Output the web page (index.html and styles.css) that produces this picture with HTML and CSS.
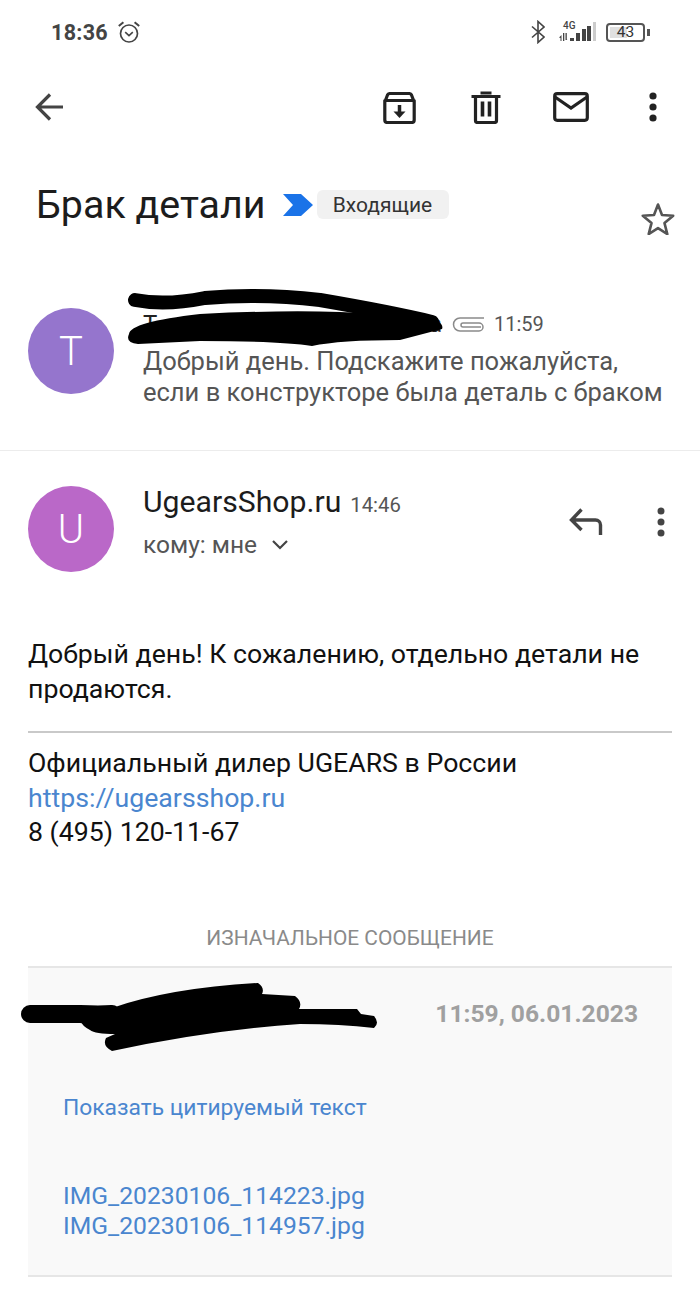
FILE: index.html
```html
<!DOCTYPE html>
<html lang="ru">
<head>
<meta charset="utf-8">
<title>Брак детали</title>
<link rel="stylesheet" href="styles.css">
</head>
<body>
<div class="page">
  <div class="status">
    <div class="status-left">
      <span class="clock">18:36</span>
      <svg class="alarm" width="24" height="24" viewBox="0 0 24 24" fill="none" stroke="#444" stroke-width="1.7"><circle cx="12" cy="13.5" r="8.5"/><path d="M8.2 12.2 12 15.6l3.8-3.4" stroke-width="1.6"/><path d="M1.8 6 6.4 2.2M22.2 6 17.6 2.2" stroke-width="2"/></svg>
    </div>
    <div class="status-right">
      <svg class="ico-bt" width="14" height="24" viewBox="0 0 14 24" fill="none" stroke="#444" stroke-width="1.6"><path d="M1 6.5 13 17 7 22.5V1.5L13 7 1 17.500"/></svg>
      <div class="signal">
        <span class="net">4G</span>
        <svg width="38" height="30" viewBox="0 0 38 30"><g fill="#444"><path d="M0 20.500l2.500-2.500v6H1.500v-3zM4 16h1.300v8H4zM6.500 16h1.300v6.500l.7.500H6.500z"/><rect x="11" y="21" width="4" height="3"/><rect x="17" y="16" width="4" height="8"/><rect x="23" y="12" width="4" height="12"/><rect x="28" y="9" width="4" height="15"/></g><rect x="34" y="5" width="3" height="19" fill="#ccc"/></svg>
      </div>
      <div class="battery-wrap">
        <div class="battery"><span class="battery-fill"></span><span class="battery-num">43</span></div>
        <span class="battery-cap"></span>
      </div>
    </div>
  </div>

  <div class="toolbar">
    <svg class="ico-back" width="30" height="30" viewBox="0 0 30 30" fill="none" stroke="#444" stroke-width="3.200"><path d="M29 15H4M16 2.500 3.500 15 16 27.500"/></svg>
    <div class="actions">
      <svg class="ico-archive" width="33" height="33" viewBox="0 0 33 33" fill="none" stroke="#222" stroke-width="3.200"><path d="M2 10.500 4.500 4a2.500 2.500 0 0 1 2-1.500h20a2.500 2.500 0 0 1 2 1.500L31 10.500M1.800 9.500h29.400V29a2.500 2.500 0 0 1-2.500 2.500H4.300A2.500 2.500 0 0 1 1.800 29z" stroke-linejoin="round"/><path d="M16.500 14v8" stroke-width="3.500"/><path d="M10.500 20.500h12L16.500 27z" fill="#222" stroke="none"/></svg>
      <svg class="ico-trash" width="30" height="33" viewBox="0 0 30 33" fill="none" stroke="#222" stroke-width="3.200"><path d="M.5 5.500h29M9.500 2h11"/><path d="M4.500 6v23.500a2 2 0 0 0 2 2h17a2 2 0 0 0 2-2V6"/><path d="M11.500 10.500v15M18.500 10.500v15" stroke-width="3.600"/></svg>
      <svg class="ico-mail" width="36" height="30" viewBox="0 0 36 30" fill="none" stroke="#222" stroke-width="3.200"><rect x="1.700" y="1.700" width="32.600" height="26.600" rx="2.500"/><path d="M2 5l16 11L34 5"/></svg>
      <svg class="ico-more" width="8" height="30" viewBox="0 0 8 30" fill="#222"><circle cx="4" cy="4" r="3.600"/><circle cx="4" cy="15" r="3.600"/><circle cx="4" cy="26" r="3.600"/></svg>
    </div>
  </div>

  <div class="subject">
    <h1 class="subject-title">Брак детали</h1>
    <svg class="marker" width="32" height="24" viewBox="0 0 32 24"><path d="M1 1h18l12 11-12 11H1l10-11z" fill="#1a73e8"/></svg>
    <span class="label">Входящие</span>
    <svg class="star" width="36" height="34" viewBox="0 0 36 34" fill="none" stroke="#555" stroke-width="2.600"><path d="M18 3.500l4 10.500 11.200.7-8.700 7.400 2.800 11-9.300-6-9.300 6 2.800-11-8.700-7.400 11.200-.7z" stroke-linejoin="round"/></svg>
  </div>

  <div class="thread collapsed">
    <div class="avatar avatar-t">T</div>
    <div class="thread-text">
      <div class="sender-row">
        <div class="sender-hidden"><span>Т</span><span>а</span></div>
        <svg class="clip" width="33" height="16" viewBox="0 0 33 16" fill="none" stroke="#8a8a8a" stroke-width="1.500"><path d="M32 2H8a6.500 6.500 0 0 0 0 13h19a4 4 0 0 0 0-8H11a2 2 0 0 0 0 4h18"/></svg>
        <span class="time-small">11:59</span>
      </div>
      <p class="snippet">Добрый день. Подскажите пожалуйста,<br>если в конструкторе была деталь с браком</p>
    </div>
  </div>

  <div class="thread open">
    <div class="avatar avatar-u">U</div>
    <div class="thread-text">
      <div class="from"><span class="from-name">UgearsShop.ru</span><span class="from-time">14:46</span></div>
      <div class="to">кому: мне
        <svg width="16" height="10" viewBox="0 0 16 10" fill="none" stroke="#444" stroke-width="2.200"><path d="M1 1l7 7 7-7"/></svg>
      </div>
    </div>
    <div class="open-actions">
      <svg width="34" height="28" viewBox="0 0 34 28" fill="none" stroke="#444" stroke-width="3.400"><path d="M31.500 27V17a5 5 0 0 0-5-5H4M12.500 1.500 2.500 12l10 10"/></svg>
      <svg width="8" height="30" viewBox="0 0 8 30" fill="#444"><circle cx="4" cy="4" r="3.500"/><circle cx="4" cy="15" r="3.500"/><circle cx="4" cy="26" r="3.500"/></svg>
    </div>
  </div>

  <div class="body">
    <p class="message">Добрый день! К сожалению, отдельно детали не продаются.</p>
    <hr class="sig-rule">
    <p class="signature">Официальный дилер UGEARS в России<br><a class="link" href="#">https://ugearsshop.ru</a><br>8 (495) 120-11-67</p>
    <div class="orig-title">ИЗНАЧАЛЬНОЕ СООБЩЕНИЕ</div>
    <div class="quote">
      <div class="quote-head"><span class="quote-from">Т</span><span class="quote-date">11:59, 06.01.2023</span></div>
      <a class="quote-toggle" href="#">Показать цитируемый текст</a>
      <div class="files">
        <a class="file" href="#">IMG_20230106_114223.jpg</a>
        <a class="file" href="#">IMG_20230106_114957.jpg</a>
      </div>
    </div>
  </div>

  <svg class="scribble" width="700" height="1289" viewBox="0 0 700 1289" fill="#000">
    <path d="M135 300Q165 306 205 298Q260 293 320 300Q390 312 432 322" fill="none" stroke="#000" stroke-width="14" stroke-linecap="round"/>
    <path d="M129 334Q130 322 200 314Q280 310 340 312L425 316Q445 322 442 329L400 340Q340 340 312 346Q280 341 200 341L138 344Q125 343 129 334z"/>
    <path d="M30 1014H80Q100 1015 112 1014" fill="none" stroke="#000" stroke-width="18" stroke-linecap="round"/>
    <path d="M80 1020L112 1008Q170 988 258 983Q265 988 262 994L295 996Q303 1002 299 1009L357 1009L361 1014L374 1016Q380 1023 374 1028Q340 1024 300 1024Q210 1030 112 1051Q102 1046 106 1038L115 1034Q95 1034 90 1030Q82 1026 80 1020z"/>
  </svg>
</div>
</body>
</html>
```
FILE: styles.css
```css
* { box-sizing: border-box; }
html, body { margin: 0; padding: 0; background: #fff; }
body { font-family: Roboto, "Noto Sans", sans-serif; color: #111; }
p, h1 { margin: 0; }
a { text-decoration: none; }

.page { position: relative; width: 700px; height: 1289px; overflow: hidden; }

.status { height: 64px; display: flex; justify-content: space-between; align-items: center; padding: 0 50px 0 51px; }
.status-left { display: flex; align-items: center; gap: 9px; }
.clock { font-size: 21.5px; font-weight: 700; color: #444; letter-spacing: .3px; }
.status-right { display: flex; align-items: center; }
.ico-bt { margin-right: 14px; }
.signal { position: relative; width: 38px; height: 30px; margin-right: 9px; }
.signal svg { display: block; }
.net { position: absolute; left: 4px; top: 4px; font-size: 10px; font-weight: 500; color: #444; line-height: 10px; }
.battery-wrap { display: flex; align-items: center; gap: 2px; }
.battery { position: relative; width: 39px; height: 19px; border: 2px solid #555; border-radius: 4px; display: flex; align-items: center; justify-content: center; }
.battery-fill { position: absolute; left: 2px; top: 2px; bottom: 2px; width: 17px; background: #e0e0e0; }
.battery-num { position: relative; font-size: 15.5px; color: #333; line-height: 15px; }
.battery-cap { width: 3px; height: 7px; background: #555; }

.toolbar { height: 86px; display: flex; justify-content: space-between; align-items: center; padding: 0 43px 0 34px; }
.actions { display: flex; align-items: center; }
.ico-archive { margin-right: 55px; }
.ico-trash { margin-right: 52px; }
.ico-mail { margin-right: 60px; }

.subject { position: relative; height: 108px; display: flex; align-items: flex-start; padding: 29px 0 0 36px; }
.subject-title { font-size: 39.4px; font-weight: 400; line-height: 52px; color: #1c1c1c; }
.marker { margin: 14px 0 0 17px; }
.label { margin: 11px 0 0 3px; height: 29px; width: 132px; padding-right: 2px; background: #f1f1f1; border-radius: 6px; font-size: 21px; line-height: 30px; text-align: center; color: #333; }
.star { position: absolute; left: 640px; top: 51px; }

.thread { display: flex; padding-left: 28px; }
.avatar { width: 86px; height: 86px; flex: none; border-radius: 50%; display: flex; align-items: center; justify-content: center; color: #fff; font-size: 40px; font-weight: 300; }
.avatar-t { background: #9575cd; }
.avatar-u { background: #ba68c8; }
.thread-text { margin-left: 29px; }

.collapsed { height: 193px; padding-top: 50px; border-bottom: 1px solid #ececec; }
.sender-row { display: flex; align-items: center; height: 36px; margin-top: -2px; }
.sender-hidden { width: 299px; display: flex; justify-content: space-between; font-size: 24px; color: #222; }
.clip { margin-left: 10px; }
.time-small { margin-left: 9px; font-size: 20px; color: #555; }
.snippet { margin-top: 4px; font-size: 25.5px; line-height: 31px; color: #555; white-space: nowrap; }

.open { position: relative; height: 146px; padding-top: 35px; }
.from { display: flex; align-items: baseline; gap: 9px; height: 38px; margin-top: -2px; }
.from-name { font-size: 30.2px; color: #1c1c1c; line-height: 36px; }
.from-time { font-size: 20.3px; color: #555; }
.to { display: flex; align-items: center; gap: 15px; margin-top: 6px; font-size: 24.5px; line-height: 34px; color: #555; }
.open-actions { position: absolute; right: 35px; top: 56px; width: 96px; display: flex; justify-content: space-between; align-items: center; }

.body { padding: 40px 28px 0; }
.message { font-size: 26.7px; line-height: 35px; color: #111; }
.sig-rule { margin: 24px 0 13px; height: 2px; border: 0; background: #c9c9c9; }
.signature { font-size: 26.7px; line-height: 34.5px; color: #111; }
.link { color: #4a86cf; }
.orig-title { margin-top: 75px; font-size: 20.9px; line-height: 26px; text-align: center; color: #8a8a8a; }
.quote { margin-top: 15px; height: 311px; padding: 0 34px 0 35px; background: #f9f9f9; border-top: 2px solid #e6e6e6; border-bottom: 2px solid #e6e6e6; }
.quote-head { display: flex; justify-content: space-between; align-items: center; height: 92px; }
.quote-from { color: #6aa84f; font-size: 24px; }
.quote-date { font-size: 24.6px; font-weight: 700; color: #a0a0a0; }
.quote-toggle { display: block; margin-top: 33px; font-size: 22.8px; line-height: 30px; color: #4a86cf; }
.files { margin-top: 58px; }
.file { display: block; font-size: 24.7px; line-height: 30px; color: #4a86cf; }

.scribble { position: absolute; left: 0; top: 0; pointer-events: none; }
```
